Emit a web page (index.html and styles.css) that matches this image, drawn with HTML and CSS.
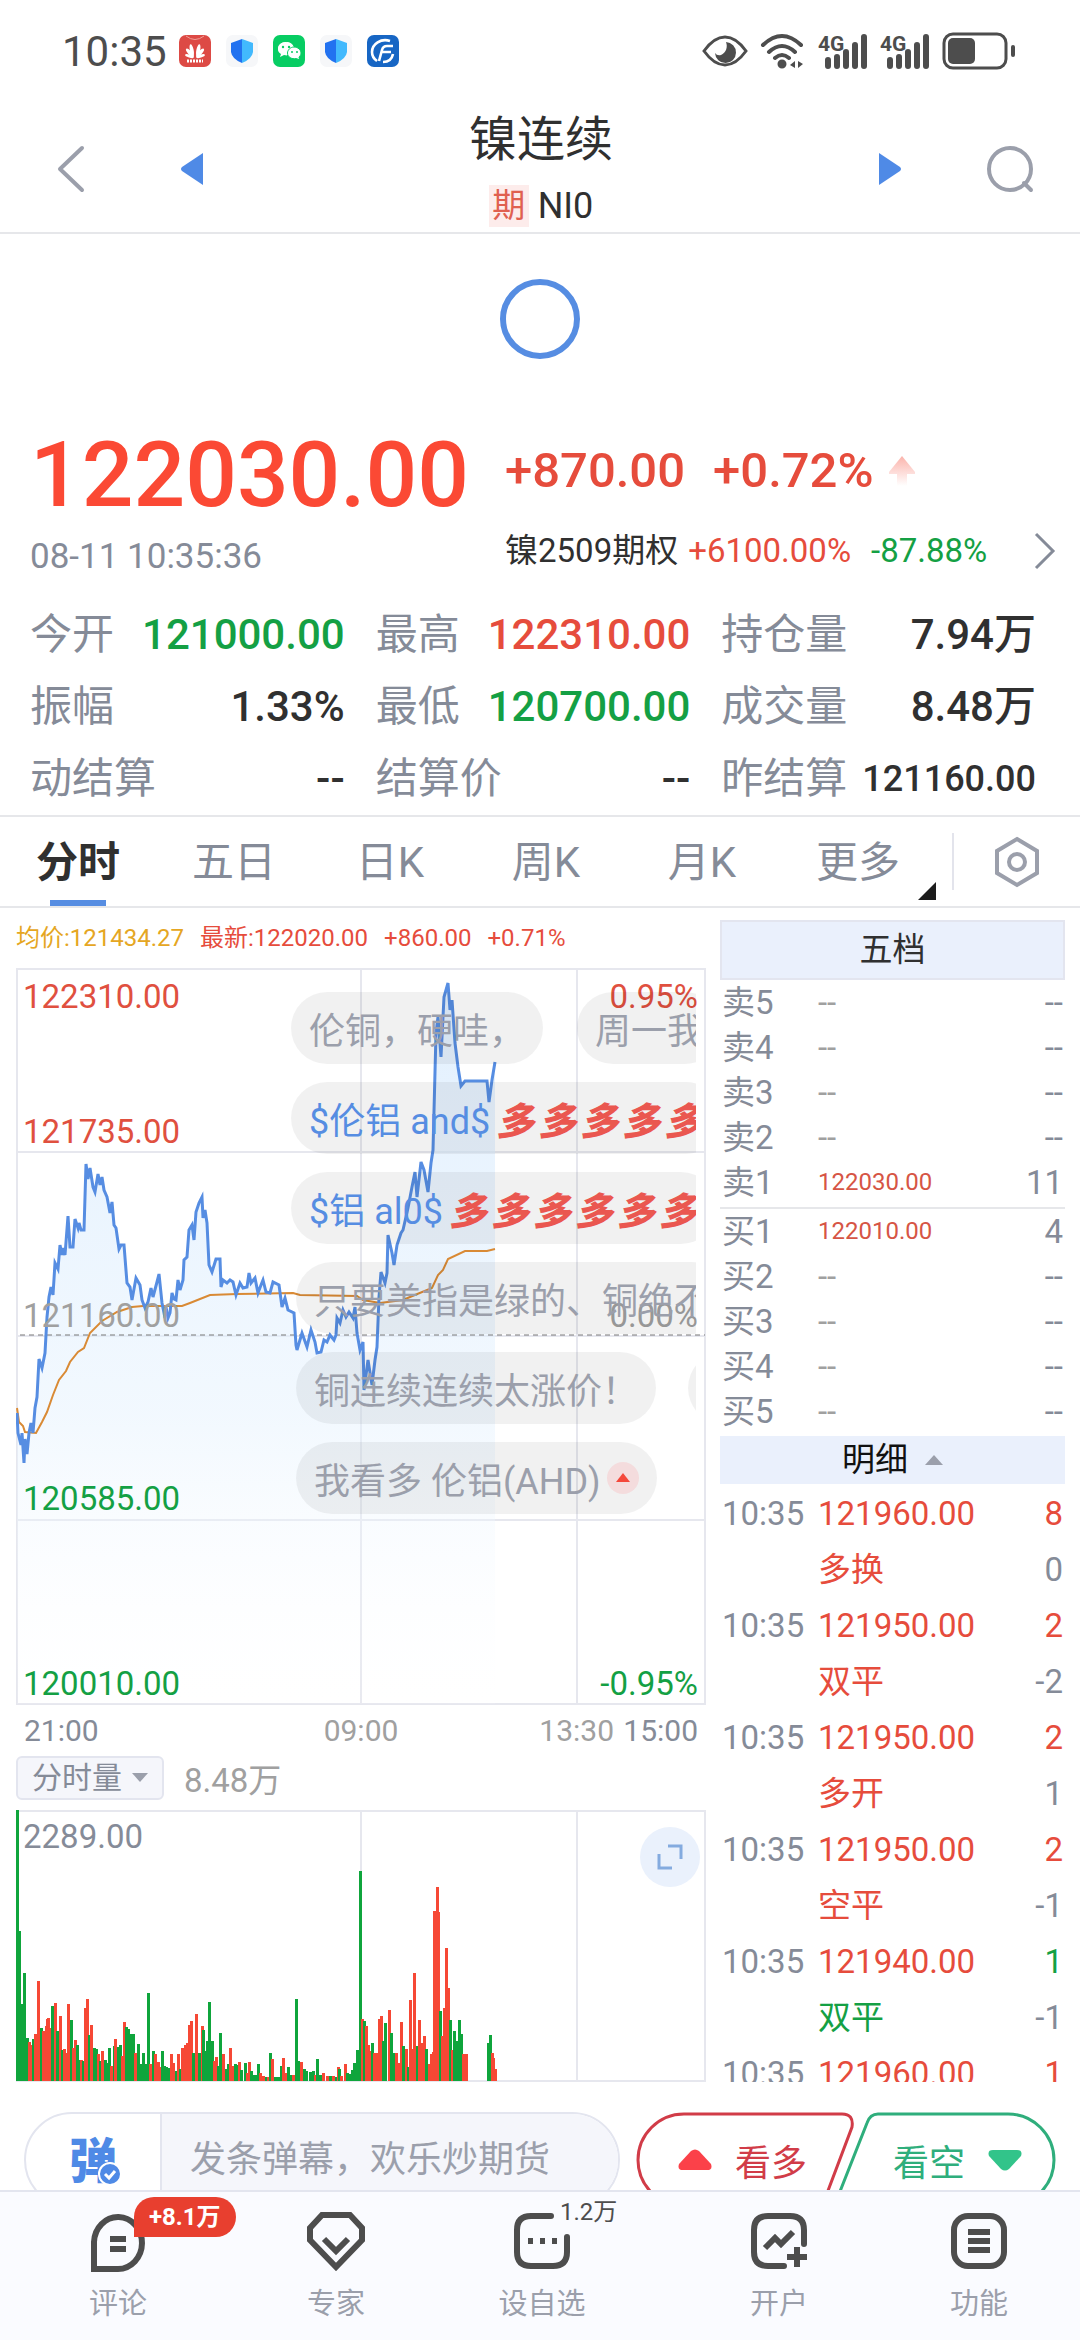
FILE: index.html
```html
<!DOCTYPE html>
<html lang="zh-CN">
<head>
    <meta charset="UTF-8">
    <meta name="viewport" content="width=device-width, initial-scale=1.0">
    <title>镍连续 NI0</title>
    <link rel="stylesheet" href="styles.css">
</head>
<body>
    <div class="status-bar">
        <span class="clock">10:35</span>
        <div class="app-icons">
            <svg width="32" height="32" viewBox="0 0 32 32">
                <rect width="32" height="32" rx="7" fill="#dd4a45"/>
                <path d="M7 1q9 7 18 0" fill="none" stroke="#f0a098"/>
                <g fill="#fff">
                    <ellipse cx="14" cy="15" rx="1.9" ry="6" transform="rotate(-12 14 21)"/>
                    <ellipse cx="18" cy="15" rx="1.9" ry="6" transform="rotate(12 18 21)"/>
                    <ellipse cx="14" cy="16" rx="1.8" ry="5.5" transform="rotate(-42 15 21)"/>
                    <ellipse cx="18" cy="16" rx="1.8" ry="5.5" transform="rotate(42 17 21)"/>
                    <ellipse cx="14" cy="17" rx="1.5" ry="4.5" transform="rotate(-72 15 21.500)"/>
                    <ellipse cx="18" cy="17" rx="1.5" ry="4.5" transform="rotate(72 17 21.500)"/>
                </g>
                <path d="M8 26h16" stroke="#fff" stroke-width="3" stroke-dasharray="2 1"/>
            </svg>
            <svg width="32" height="32" viewBox="0 0 32 32">
                <rect width="32" height="32" rx="7" fill="#f6f7f9"/>
                <path d="M16 4L5 8v9q1 7 11 11z" fill="#2272f0"/>
                <path d="M16 4l11 4v9q-1 7-11 11z" fill="#42b9fd"/>
            </svg>
            <svg width="32" height="32" viewBox="0 0 32 32">
                <rect width="32" height="32" rx="7" fill="#07cd63"/>
                <path d="M13 7c-5 0-8 3-8 7 0 2 1 4 3 5l-1 3 4-2 3 .4M13 7c4 0 7 2 8 6" fill="#fff"/>
                <ellipse cx="13" cy="13.500" rx="8" ry="6.500" fill="#fff"/>
                <path d="M21 12c4 0 7 3 7 6 0 2-1 3-2 4l.5 3-3-1.500c-5 1-9-1.500-9-5.500 0-3 3-6 6.500-6z" fill="#fff" stroke="#07cd63"/>
                <g fill="#07cd63"><circle cx="10" cy="12" r="1.200"/><circle cx="16" cy="12" r="1.200"/><circle cx="19" cy="17" r="1"/><circle cx="24" cy="17" r="1"/></g>
            </svg>
            <svg width="32" height="32" viewBox="0 0 32 32">
                <rect width="32" height="32" rx="7" fill="#f6f7f9"/>
                <path d="M16 4L5 8v9q1 7 11 11z" fill="#2272f0"/>
                <path d="M16 4l11 4v9q-1 7-11 11z" fill="#42b9fd"/>
            </svg>
            <svg width="32" height="32" viewBox="0 0 32 32">
                <rect width="32" height="32" rx="7" fill="#1766c4"/>
                <path d="M23 6C14 3 5 9 5 17c0 4 2 7 5 9M12 26l3-11q1-4 5-4h6M15 17h9M16 27c6 0 9-3 10-8" fill="none" stroke="#fff" stroke-width="2.600"/>
            </svg>
        </div>
        <div class="system-icons">
            <svg width="46" height="36" viewBox="0 0 46 36">
                <path d="M2 18Q12 4 23 4t21 14Q34 32 23 32T2 18z" fill="none" stroke="#4d4d4d" stroke-width="3"/>
                <path d="M24 9a10.500 10.500 0 1 1-11 11q2 3 6 2c5-2 7-8 5-13z" fill="#4d4d4d"/>
            </svg>
            <svg width="46" height="36" viewBox="0 0 46 36" fill="none" stroke="#4d4d4d" stroke-width="4" stroke-linecap="round">
                <path d="M3 12q19-18 38 0M9 19q13-12 26 0M15 25q7-6 14 0"/>
                <circle cx="22" cy="31" r="2.500" fill="#4d4d4d"/>
                <path d="M35 28v7l-5-3zM38 28v7l5-4z" fill="#4d4d4d" stroke="none"/>
            </svg>
            <svg class="signal" width="50" height="36" viewBox="0 0 50 36">
                <text x="0" y="18">4G</text>
                <path d="M10 27v6M19 24v9M28 19v14M37 12v21M46 4v29"/>
            </svg>
            <svg class="signal" width="50" height="36" viewBox="0 0 50 36">
                <text x="0" y="18">4G</text>
                <path d="M10 27v6M19 24v9M28 19v14M37 12v21M46 4v29"/>
            </svg>
            <svg width="74" height="38" viewBox="0 0 74 38">
                <rect x="2" y="2" width="62" height="34" rx="9" fill="none" stroke="#4d4d4d" stroke-width="3"/>
                <rect x="6" y="6" width="27" height="26" rx="5" fill="#4d4d4d"/>
                <path d="M71 15v8" stroke="#4d4d4d" stroke-width="4" stroke-linecap="round"/>
            </svg>
        </div>
    </div>

    <header class="header">
        <button class="icon-button" aria-label="返回">
            <svg width="30" height="48" viewBox="0 0 30 48"><path d="M26 3L4 24l22 21" fill="none" stroke="#9b9fab" stroke-width="4" stroke-linecap="round" stroke-linejoin="round"/></svg>
        </button>
        <button class="icon-button" aria-label="上一个">
            <svg width="24" height="34" viewBox="0 0 24 34"><path d="M23 1v32L2 19q-2-2 0-4z" fill="#4f8ae6"/></svg>
        </button>
        <div class="title">
            <h1>镍连续</h1>
            <p><span class="tag">期</span>NI0</p>
        </div>
        <button class="icon-button" aria-label="下一个">
            <svg width="24" height="34" viewBox="0 0 24 34"><path d="M1 1v32l21-14q2-2 0-4z" fill="#4f8ae6"/></svg>
        </button>
        <button class="icon-button" aria-label="搜索">
            <svg width="48" height="48" viewBox="0 0 48 48" fill="none" stroke="#9b9fab" stroke-width="4"><circle cx="24" cy="24" r="21"/><path d="M38 38l7 7" stroke-linecap="round"/></svg>
        </button>
    </header>

    <div class="loading"><span class="ring"></span></div>

    <section class="quote">
        <div>
            <div class="price">122030.00</div>
            <div class="quote-time">08-11 10:35:36</div>
        </div>
        <div>
            <div class="change">
                <span>+870.00</span><span>+0.72%</span>
                <svg width="28" height="32" viewBox="0 0 28 32">
                    <defs><linearGradient id="fade" x1="0" y1="0" x2="0" y2="1"><stop offset="0" stop-color="#fbb3ab"/><stop offset="1" stop-color="#fff"/></linearGradient></defs>
                    <path d="M14 1l13 16v2h-8v12H9V19H1v-2z" fill="url(#fade)"/>
                </svg>
            </div>
            <a class="option" href="#option">
                <span>镍2509期权</span><span class="up">+6100.00%</span><span class="down">-87.88%</span>
                <svg width="22" height="38" viewBox="0 0 22 38"><path d="M2 2l17 17L2 36" fill="none" stroke="#858b98" stroke-width="3"/></svg>
            </a>
        </div>
    </section>

    <dl class="stats">
        <div><dt>今开</dt><dd class="down">121000.00</dd></div>
        <div><dt>最高</dt><dd class="up">122310.00</dd></div>
        <div><dt>持仓量</dt><dd>7.94万</dd></div>
        <div><dt>振幅</dt><dd>1.33%</dd></div>
        <div><dt>最低</dt><dd class="down">120700.00</dd></div>
        <div><dt>成交量</dt><dd>8.48万</dd></div>
        <div><dt>动结算</dt><dd>--</dd></div>
        <div><dt>结算价</dt><dd>--</dd></div>
        <div><dt>昨结算</dt><dd class="small">121160.00</dd></div>
    </dl>

    <nav class="tabs">
        <button class="tab active">分时</button>
        <button class="tab">五日</button>
        <button class="tab">日K</button>
        <button class="tab">周K</button>
        <button class="tab">月K</button>
        <button class="tab more">更多</button>
        <button class="settings" aria-label="设置">
            <svg width="50" height="52" viewBox="0 0 50 52" fill="none" stroke="#9b9fab" stroke-width="4"><path d="M25 3l20 12v22L25 49 5 37V15z"/><circle cx="25" cy="26" r="8"/></svg>
        </button>
    </nav>

    <main class="board">
        <section class="charts">
            <div class="legend">
                <span class="avg">均价:121434.27</span><span class="up">最新:122020.00</span><span class="up">+860.00</span><span class="up">+0.71%</span>
            </div>
            <div class="chart">
                <svg class="plot" viewBox="0 0 690 737">
                    <defs>
                        <linearGradient id="areaFill" x1="0" y1="0" x2="0" y2="1">
                            <stop offset="0" stop-color="#d5e9fd" stop-opacity="0.7"/>
                            <stop offset="0.6" stop-color="#e5f2fe" stop-opacity="0.5"/>
                            <stop offset="1" stop-color="#ffffff" stop-opacity="0.1"/>
                        </linearGradient>
                    </defs>
                    <path class="grid" d="M1 1H689V736H1zM1 184H689M1 368H689M1 552H689M345 1V736M561 1V736"/>
                    <path id="priceArea" fill="url(#areaFill)"/>
                    <path class="base-line" d="M4 367H689"/>
                    <path id="avgLine" class="avg-line"/>
                    <path id="priceLine" class="price-line"/>
                    <text class="red" x="7" y="40">122310.00</text>
                    <text class="red" x="7" y="175">121735.00</text>
                    <text class="gray" x="7" y="359">121160.00</text>
                    <text class="green" x="7" y="542">120585.00</text>
                    <text class="green" x="7" y="727">120010.00</text>
                    <text class="red end" x="682" y="40">0.95%</text>
                    <text class="gray end" x="682" y="359">0.00%</text>
                    <text class="green end" x="682" y="727">-0.95%</text>
                </svg>
                <div class="comments">
                    <div class="lane"><span class="pill">伦铜，硬哇，</span><span class="pill">周一我</span></div>
                    <div class="lane"><span class="pill"><a href="#and">$伦铝 and$</a><b>多</b><b>多</b><b>多</b><b>多</b><b>多</b></span></div>
                    <div class="lane"><span class="pill"><a href="#al0">$铝 al0$</a><b>多</b><b>多</b><b>多</b><b>多</b><b>多</b><b>多</b></span></div>
                    <div class="lane shifted"><span class="pill">只要美指是绿的、铜绝不</span></div>
                    <div class="lane shifted"><span class="pill">铜连续连续太涨价！</span><span class="pill"></span></div>
                    <div class="lane shifted"><span class="pill">我看多 伦铝(AHD)
                        <svg width="32" height="32" viewBox="0 0 32 32"><circle cx="16" cy="16" r="16" fill="#f4dcdd"/><path d="M16 11l7 9H9z" fill="#f4483b"/></svg></span></div>
                </div>
            </div>
            <div class="axis">
                <span>21:00</span><span class="mid center">09:00</span><span class="mid">13:30</span><span>15:00</span>
            </div>
            <div class="toolbar">
                <button class="indicator">分时量 <svg width="16" height="10" viewBox="0 0 16 10"><path d="M0 0h16L8 9z" fill="#9b9fab"/></svg></button>
                <span>8.48万</span>
            </div>
            <div class="chart">
                <svg class="plot" viewBox="0 0 690 272">
                    <path class="grid" d="M1 1H689V271H1zM345 1V271M561 1V271"/>
                    <g id="volumeBars"></g>
                    <text class="slate" x="7" y="38">2289.00</text>
                </svg>
                <button class="expand" aria-label="全屏">
                    <svg width="26" height="26" viewBox="0 0 26 26" fill="none" stroke="#84abdf" stroke-width="3"><path d="M11 2h13v13M2 10v14h13"/></svg>
                </button>
            </div>
        </section>

        <aside class="depth">
            <h2 class="depth-title">五档</h2>
            <table class="book">
                <tbody>
                    <tr><th>卖5</th><td>--</td><td>--</td></tr>
                    <tr><th>卖4</th><td>--</td><td>--</td></tr>
                    <tr><th>卖3</th><td>--</td><td>--</td></tr>
                    <tr><th>卖2</th><td>--</td><td>--</td></tr>
                    <tr><th>卖1</th><td class="quote-price">122030.00</td><td>11</td></tr>
                </tbody>
            </table>
            <table class="book buy">
                <tbody>
                    <tr><th>买1</th><td class="quote-price">122010.00</td><td>4</td></tr>
                    <tr><th>买2</th><td>--</td><td>--</td></tr>
                    <tr><th>买3</th><td>--</td><td>--</td></tr>
                    <tr><th>买4</th><td>--</td><td>--</td></tr>
                    <tr><th>买5</th><td>--</td><td>--</td></tr>
                </tbody>
            </table>
            <button class="detail-title">明细 <svg width="18" height="10" viewBox="0 0 18 10"><path d="M0 10h18L9 0z" fill="#9b9fab"/></svg></button>
            <table class="trades">
                <tbody>
                    <tr><td>10:35</td><td class="up">121960.00</td><td class="up">8</td></tr>
                    <tr><td></td><td class="up">多换</td><td>0</td></tr>
                    <tr><td>10:35</td><td class="up">121950.00</td><td class="up">2</td></tr>
                    <tr><td></td><td class="up">双平</td><td>-2</td></tr>
                    <tr><td>10:35</td><td class="up">121950.00</td><td class="up">2</td></tr>
                    <tr><td></td><td class="up">多开</td><td>1</td></tr>
                    <tr><td>10:35</td><td class="up">121950.00</td><td class="up">2</td></tr>
                    <tr><td></td><td class="up">空平</td><td>-1</td></tr>
                    <tr><td>10:35</td><td class="up">121940.00</td><td class="down">1</td></tr>
                    <tr><td></td><td class="down">双平</td><td>-1</td></tr>
                    <tr><td>10:35</td><td class="up">121960.00</td><td class="up">1</td></tr>
                </tbody>
            </table>
        </aside>
    </main>

    <section class="dock">
        <div class="composer">
            <button class="bullet" aria-label="弹幕开关">
                <span>弹</span>
                <svg width="24" height="24" viewBox="0 0 24 24"><circle cx="12" cy="12" r="11" fill="#4f8ae6" stroke="#fff" stroke-width="2"/><path d="M7 12l4 4 6-7" fill="none" stroke="#fff" stroke-width="3"/></svg>
            </button>
            <input type="text" aria-label="弹幕" placeholder="发条弹幕，欢乐炒期货">
        </div>
        <div class="vote">
            <svg class="vote-frame" viewBox="0 0 420 96" fill="none" stroke-width="3">
                <path d="M48 2H206Q218 2 216 15L190 84Q187 94 177 94H48A46 46 0 0 1 48 2z" stroke="#d13c48"/>
                <path d="M242 2H372A46 46 0 0 1 372 94H212Q199 94 203 82L231 11Q234 2 242 2z" stroke="#2fae7c"/>
            </svg>
            <button class="bull"><svg width="36" height="22" viewBox="0 0 36 22"><path d="M14 2q4-3 8 0l12 13q2 6-4 6H6q-6 0-4-6z" fill="#fb4149"/></svg>看多</button>
            <button class="bear">看空<svg width="36" height="22" viewBox="0 0 36 22"><path d="M14 20q4 3 8 0L34 7q2-6-4-6H6Q0 1 2 7z" fill="#32c48a"/></svg></button>
        </div>
    </section>

    <nav class="bottom-nav">
        <a href="#comment">
            <svg width="62" height="62" viewBox="0 0 62 62"><path d="M7 59V32A24 26 0 1 1 31 59z"/><path d="M23 29h16M23 39h16"/></svg>
            <span class="badge">+8.1万</span>
            评论
        </a>
        <a href="#expert">
            <svg width="62" height="62" viewBox="0 0 62 62"><path d="M17 5h28l12 13v12L31 57 5 30V18z"/><path d="M19 29l12 12 12-12"/></svg>
            专家
        </a>
        <a href="#watch">
            <svg width="62" height="62" viewBox="0 0 62 62"><path d="M40 6H20Q6 6 6 20v22q0 14 14 14h22q14 0 14-14V27" stroke-linecap="round"/><path d="M17 31h5M29 31h5M41 31h5"/></svg>
            <span class="count">1.2万</span>
            设自选
        </a>
        <a href="#open">
            <svg width="62" height="62" viewBox="0 0 62 62"><path d="M36 56H20Q6 56 6 42V20Q6 6 20 6h22q14 0 14 14v14" stroke-linecap="round"/><path d="M17 38l10-10 6 6 12-12M49 37v20M39 47h20"/></svg>
            开户
        </a>
        <a href="#function">
            <svg width="62" height="62" viewBox="0 0 62 62"><rect x="6" y="6" width="50" height="50" rx="14"/><path d="M20 22h22M20 31h22M20 40h22"/></svg>
            功能
        </a>
    </nav>

    <script src="app.js"></script>
</body>
</html>
```
FILE: styles.css
```css
* {
    box-sizing: border-box;
}
body {
    margin: 0;
    min-height: 100vh;
    display: flex;
    flex-direction: column;
    background-color: #fff;
    color: #303030;
    font-family: Roboto, "Noto Sans CJK SC", sans-serif;
    font-size: 33px;
    overflow-x: hidden;
}
h1, h2, p, dl, dd {
    margin: 0;
    font-weight: normal;
}
button {
    padding: 0;
    border: none;
    background: none;
    font: inherit;
    color: inherit;
    cursor: pointer;
}
a {
    color: inherit;
    text-decoration: none;
}
svg {
    flex: none;
}
.up {
    color: #e64c3c;
}
.down {
    color: #14a044;
}

/* status bar */
.status-bar {
    height: 102px;
    padding: 0 64px 0 62px;
    display: flex;
    align-items: center;
}
.clock {
    font-size: 42px;
    color: #4d4d4d;
}
.app-icons {
    display: flex;
    gap: 15px;
    margin-left: 12px;
}
.system-icons {
    display: flex;
    align-items: center;
    gap: 12px;
    margin-left: auto;
}
.signal path {
    stroke: #4d4d4d;
    stroke-width: 6;
    stroke-linecap: round;
}
.signal text {
    font-size: 21px;
    font-weight: bold;
    fill: #4d4d4d;
}

/* header */
.header {
    height: 132px;
    padding: 3px 46px 0 56px;
    display: flex;
    align-items: center;
    border-bottom: 2px solid #e6e7ea;
}
.icon-button {
    display: flex;
}
.icon-button:first-child {
    margin-right: 94px;
}
.icon-button:last-child {
    margin-left: 84px;
}
.title {
    flex: 1;
    text-align: center;
}
.title h1 {
    font-size: 48px;
    line-height: 60px;
}
.title p {
    display: flex;
    justify-content: center;
    gap: 9px;
    margin-top: 15px;
    font-size: 36px;
    line-height: 42px;
}
.tag {
    width: 40px;
    background-color: #fdeceb;
    color: #e0604f;
    font-size: 33px;
    text-align: center;
}

.loading {
    display: flex;
    justify-content: center;
    padding: 45px 0 67px;
}
.ring {
    width: 80px;
    height: 80px;
    border: 6px solid #568de2;
    border-radius: 50%;
}

/* quote */
.quote {
    display: grid;
    grid-template-columns: 475px 1fr;
    padding: 0 24px 0 30px;
}
.price {
    color: #fb4934;
    font-size: 91px;
    font-weight: 500;
    line-height: 98px;
}
.quote-time {
    margin-top: 9px;
    color: #858b98;
    font-size: 35px;
    line-height: 48px;
}
.change {
    display: flex;
    align-items: center;
    gap: 28px;
    color: #e64c3c;
    font-size: 49px;
    font-weight: 500;
    line-height: 90px;
}
.change svg {
    margin-left: -14px;
}
.option {
    display: flex;
    align-items: center;
    margin-top: 11px;
    line-height: 48px;
}
.option .up {
    margin: 0 20px 0 10px;
}
.option svg {
    margin-left: auto;
}

.stats {
    display: grid;
    grid-template-columns: repeat(3, 1fr);
    column-gap: 31px;
    padding: 18px 44px 0 30px;
    border-bottom: 2px solid #e6e7ea;
    font-size: 42px;
    line-height: 72px;
}
.stats div {
    display: flex;
    justify-content: space-between;
    height: 72px;
    white-space: nowrap;
}
.stats dt {
    color: #858b98;
}
.stats dd {
    font-weight: 500;
}
.stats .small {
    font-size: 36px;
}

/* period tabs */
.tabs {
    height: 91px;
    display: grid;
    grid-template-columns: repeat(6, 156fr) 144fr;
    border-bottom: 2px solid #e6e7ea;
    color: #858b98;
    font-size: 42px;
}
.tab {
    position: relative;
    padding-bottom: 6px;
}
.active {
    color: #303030;
    font-weight: bold;
}
.active::after {
    content: "";
    position: absolute;
    left: 50%;
    bottom: 0;
    width: 56px;
    height: 6px;
    margin-left: -28px;
    background-color: #568de2;
}
.more::after {
    content: "";
    position: absolute;
    right: 0;
    bottom: 6px;
    border-left: 18px solid transparent;
    border-bottom: 18px solid #1c1c1c;
}
.settings {
    display: flex;
    justify-content: center;
    align-items: center;
    margin: 16px 0 16px 16px;
    border-left: 2px solid #e3e4ec;
}

/* board */
.board {
    display: grid;
    grid-template-columns: 690fr 345fr;
    gap: 14px;
    padding: 0 15px 0 16px;
}
.legend {
    display: flex;
    gap: 16px;
    font-size: 24px;
    line-height: 60px;
}
.avg {
    color: #e5a623;
}
.chart {
    position: relative;
}
.plot {
    display: block;
    width: 100%;
}
.plot text {
    font-size: 33px;
}
.grid {
    fill: none;
    stroke: #e6e7ee;
    stroke-width: 2;
}
.base-line {
    stroke: #777;
    stroke-width: 1;
    stroke-dasharray: 5 4;
}
.price-line {
    fill: none;
    stroke: #568de2;
    stroke-width: 3;
}
.avg-line {
    fill: none;
    stroke: #d98a35;
    stroke-width: 2;
}
.plot .red {
    fill: #e0503f;
}
.plot .green {
    fill: #14a044;
}
.plot .gray {
    fill: #a0a0a0;
}
.plot .slate {
    fill: #858b98;
}
.plot .end {
    text-anchor: end;
}

/* bullet comments over the chart */
.comments {
    position: absolute;
    top: 24px;
    left: 275px;
    right: 10px;
    display: flex;
    flex-direction: column;
    gap: 18px;
    overflow: hidden;
}
.lane {
    display: flex;
    gap: 34px;
    height: 72px;
}
.shifted {
    gap: 32px;
    padding-left: 5px;
}
.pill {
    display: flex;
    flex: none;
    align-items: center;
    min-width: 90px;
    padding: 0 18px;
    border-radius: 36px;
    background-color: rgba(0, 0, 0, 0.055);
    color: #9b9fab;
    font-size: 36px;
    white-space: nowrap;
}
.pill a {
    margin-right: 4px;
    color: #568de2;
}
.pill b {
    width: 42px;
    color: #ea5750;
    font-size: 38px;
    font-weight: 900;
    font-style: italic;
    text-align: center;
}
.pill svg {
    margin-left: 6px;
}

.axis {
    display: grid;
    grid-template-columns: 260fr 154fr 176fr 84fr;
    padding: 0 8px;
    color: #858b98;
    font-size: 30px;
    line-height: 51px;
    text-align: right;
}
.axis span:first-child {
    text-align: left;
}
.axis .mid {
    color: #a0a0a0;
}
.axis .center {
    text-align: center;
}
.toolbar {
    display: flex;
    align-items: center;
    gap: 20px;
    height: 44px;
    margin-bottom: 10px;
    color: #a0a0a0;
}
.indicator {
    display: flex;
    justify-content: center;
    align-items: center;
    gap: 10px;
    width: 148px;
    height: 44px;
    border: 2px solid #e3e5ef;
    border-radius: 6px;
    background-color: #f5f6fb;
    color: #858b98;
    font-size: 30px;
    line-height: 40px;
}
.expand {
    position: absolute;
    top: 17px;
    right: 6px;
    display: flex;
    justify-content: center;
    align-items: center;
    width: 60px;
    height: 60px;
    border-radius: 50%;
    background-color: #eaf1fc;
}

/* order book and trades, cut off at the foot of the charts */
.depth {
    height: 0;
    min-height: 100%;
    padding-top: 12px;
    overflow: hidden;
    color: #858b98;
}
.depth-title {
    height: 60px;
    border: 2px solid #e3e5ef;
    background-color: #eaf0fc;
    color: #303030;
    font-size: 33px;
    line-height: 56px;
    text-align: center;
}
.book, .trades {
    width: 100%;
    border-collapse: collapse;
    table-layout: fixed;
}
.book th, .book td, .trades td {
    padding: 0 2px;
    font-weight: normal;
    text-align: left;
    white-space: nowrap;
}
.book th, .trades td:first-child {
    width: 96px;
}
.book td:last-child, .trades td:last-child {
    width: 70px;
    text-align: right;
}
.book td:nth-child(2) {
    color: #a0a0a0;
}
.book tr {
    height: 45px;
    line-height: 45px;
}
.buy {
    margin-top: 2px;
    border-top: 2px solid #e6e7ea;
}
.book td.quote-price {
    color: #d65545;
    font-size: 24px;
}
.detail-title {
    display: flex;
    justify-content: center;
    align-items: center;
    gap: 17px;
    width: 100%;
    height: 48px;
    margin: 2px 0;
    background-color: #eaf0fc;
    color: #111;
    line-height: 48px;
}
.trades tr {
    height: 56px;
    line-height: 56px;
}

/* comment box and vote buttons */
.dock {
    display: flex;
    justify-content: space-between;
    height: 108px;
    padding: 30px 24px 0;
    overflow: hidden;
}
.composer {
    display: flex;
    width: 596px;
    height: 96px;
    border: 2px solid #e3e5ef;
    border-radius: 48px;
    overflow: hidden;
}
.bullet {
    position: relative;
    width: 136px;
    padding-bottom: 6px;
    border-right: 2px solid #e3e5ef;
    color: #4f8ae6;
    font-size: 48px;
    font-weight: 900;
}
.bullet svg {
    position: absolute;
    right: 38px;
    bottom: 20px;
}
.composer input {
    flex: 1;
    min-width: 0;
    padding: 0 28px;
    border: none;
    background-color: #f5f6fb;
    font: inherit;
    font-size: 36px;
}
.composer input::placeholder {
    color: #9b9fab;
}
.vote {
    position: relative;
    display: flex;
    width: 420px;
    height: 96px;
    font-size: 36px;
}
.vote-frame {
    position: absolute;
    width: 100%;
}
.vote button {
    flex: 1;
    display: flex;
    justify-content: center;
    align-items: center;
    gap: 22px;
}
.vote .bull {
    padding-left: 8px;
    color: #d13c48;
}
.vote .bear {
    padding-left: 20px;
    color: #2fae7c;
}

/* bottom nav */
.bottom-nav {
    flex: 1;
    display: grid;
    grid-template-columns: 236fr 200fr 212fr 262fr 138fr;
    padding: 18px 32px 0 0;
    border-top: 2px solid #e3e5ef;
    background-color: #fafbff;
    color: #9b9fab;
    font-size: 29px;
    line-height: 44px;
}
.bottom-nav a {
    position: relative;
    display: flex;
    flex-direction: column;
    align-items: center;
    gap: 10px;
}
.bottom-nav svg {
    fill: none;
    stroke: #4d4d4d;
    stroke-width: 6;
}
.badge, .count {
    position: absolute;
    font-size: 24px;
}
.badge {
    top: -13px;
    left: 134px;
    height: 40px;
    padding: 0 15px;
    border-radius: 20px 20px 20px 0;
    background-color: #e83f2f;
    color: #fff;
    font-weight: bold;
    line-height: 40px;
}
.count {
    top: -16px;
    left: 120px;
    padding-left: 4px;
    background-color: #fafbff;
    color: #4d4d4d;
    line-height: 36px;
}
```
FILE: app.js
```javascript
// 分时价格线 [x, y]
const price = [
    [1,445],[2,465],[5,477],[6,465],[8,495],[9,471],[11,486],[13,465],[15,455],[17,465],[19,440],[21,429],
    [23,391],[26,400],[29,385],[31,349],[33,329],[35,319],[37,327],[39,295],[42,301],[44,277],[46,287],[47,280],
    [49,287],[52,248],[54,279],[57,279],[59,251],[62,260],[63,255],[65,262],[68,262],[70,196],[72,211],[74,200],
    [77,219],[79,224],[82,206],[84,217],[86,209],[88,222],[91,229],[94,245],[96,234],[98,257],[100,260],[103,281],
    [105,277],[108,277],[111,315],[114,319],[116,332],[120,310],[124,317],[126,332],[129,340],[132,334],[135,320],
    [137,329],[141,314],[143,306],[146,335],[148,345],[150,339],[152,350],[154,345],[156,325],[158,331],[160,332],
    [162,312],[164,322],[167,312],[168,292],[171,289],[173,262],[176,257],[178,272],[180,244],[183,235],[186,229],
    [187,250],[189,242],[191,255],[193,297],[196,304],[200,291],[204,291],[205,319],[207,312],[211,315],[214,312],
    [217,314],[220,327],[224,315],[227,320],[231,319],[233,305],[235,315],[239,310],[242,325],[245,317],[247,312],
    [250,324],[254,325],[257,314],[263,317],[266,339],[269,330],[272,342],[278,345],[280,377],[281,382],[286,365],
    [291,379],[295,362],[299,374],[301,385],[305,384],[308,372],[311,374],[314,367],[318,372],[320,367],[321,350],
    [324,355],[327,342],[330,349],[333,344],[337,350],[339,339],[341,365],[344,382],[347,374],[348,422],[352,392],
    [356,417],[359,392],[361,379],[363,329],[365,304],[369,315],[371,305],[372,267],[376,285],[378,297],[381,277],
    [385,265],[387,262],[392,240],[396,219],[399,204],[401,229],[405,194],[408,202],[412,224],[415,195],[417,182],
    [420,65],[422,49],[425,89],[428,29],[432,15],[434,42],[436,32],[439,75],[442,99],[445,118],[449,113],[471,113],
    [473,134],[476,112],[479,94]
];

// 均价线
const average = [
    [1,440],[3,454],[7,458],[9,464],[20,465],[26,454],[31,444],[37,427],[43,412],[50,403],[54,394],[62,384],[68,380],
    [74,365],[86,353],[101,344],[116,339],[127,338],[166,338],[174,335],[184,331],[194,327],[221,326],[277,325],
    [284,327],[341,328],[347,332],[364,335],[387,332],[394,329],[416,320],[422,307],[427,302],[432,291],[449,283],
    [471,283],[479,281]
];

// 成交量 [x, 高度, 颜色]
const g = '#0fa53c';
const r = '#f64835';
const volume = [
    [1,271,g],[3,150,g],[5,77,g],[8,108,g],[11,43,g],[13,39,r],[15,36,r],[17,42,g],[19,47,r],[22,100,r],[25,53,g],
    [27,50,r],[30,55,r],[31,62,r],[32,63,r],[34,53,r],[36,75,g],[39,78,r],[41,50,g],[44,65,r],[46,31,g],[48,32,r],
    [50,28,r],[52,77,r],[55,61,g],[57,33,r],[59,41,r],[61,36,g],[63,21,g],[65,21,r],[67,20,g],[69,73,r],[71,82,r],
    [73,46,g],[75,56,r],[78,33,g],[80,32,g],[82,27,r],[84,20,g],[86,30,r],[89,21,g],[91,18,g],[93,33,g],[95,15,r],
    [98,35,g],[99,42,r],[102,34,g],[104,36,g],[106,25,r],[108,59,r],[110,54,g],[112,52,g],[114,47,g],[117,47,g],
    [119,28,r],[122,37,g],[124,17,g],[127,28,g],[129,17,g],[132,88,g],[134,17,r],[137,30,g],[139,27,r],[142,19,r],
    [144,14,r],[146,30,g],[148,15,g],[150,14,g],[152,13,g],[155,27,r],[157,18,r],[160,10,g],[162,27,r],[164,12,g],
    [166,33,r],[169,36,r],[171,38,r],[173,56,r],[175,60,r],[177,28,g],[180,67,r],[183,28,g],[186,55,r],[187,51,g],
    [190,30,g],[191,40,g],[193,79,g],[196,40,g],[198,20,r],[200,24,r],[202,15,g],[204,48,g],[207,27,r],[210,12,g],
    [212,17,g],[214,33,r],[217,15,r],[219,17,g],[221,16,g],[223,19,r],[225,11,g],[229,18,g],[231,8,r],[233,19,r],
    [235,10,g],[238,6,g],[240,6,g],[242,17,g],[244,8,r],[247,5,r],[250,4,g],[252,4,r],[254,28,g],[256,22,r],[259,4,g],
    [262,4,g],[265,15,g],[267,23,r],[270,8,r],[272,14,g],[275,6,g],[277,6,r],[280,82,g],[282,20,g],[285,19,r],
    [288,12,g],[290,10,g],[294,9,g],[297,10,g],[299,6,r],[301,22,g],[304,6,g],[307,8,r],[311,5,r],[314,5,g],[317,5,r],
    [320,4,g],[322,14,r],[323,12,g],[325,5,r],[329,17,r],[331,8,g],[333,7,g],[336,11,g],[338,18,g],[341,31,g],
    [344,210,g],[346,62,r],[348,60,g],[350,55,r],[352,36,r],[354,30,r],[356,38,g],[358,28,r],[361,28,r],[363,62,r],
    [365,65,r],[367,40,g],[369,58,g],[373,71,r],[375,48,g],[377,28,g],[380,28,r],[383,18,r],[385,59,r],[387,35,g],
    [390,32,r],[392,14,g],[394,81,r],[396,32,r],[398,108,r],[401,35,g],[403,61,r],[405,38,r],[408,45,r],[410,32,g],
    [413,17,r],[415,27,r],[417,29,r],[418,170,r],[421,194,r],[422,169,r],[424,70,g],[426,45,r],[428,73,r],[430,133,r],
    [432,93,r],[434,61,g],[436,31,r],[438,50,g],[440,40,g],[443,61,g],[445,47,g],[447,27,r],[450,27,r],[472,38,g],
    [474,46,g],[476,28,r],[477,23,r],[479,12,r]
];

function toPath(points) {
    return 'M' + points.map(p => p.join(' ')).join('L');
}

document.getElementById('priceLine').setAttribute('d', toPath(price));
document.getElementById('priceArea').setAttribute('d', toPath(price) + 'V736H1Z');
document.getElementById('avgLine').setAttribute('d', toPath(average));

const bars = document.getElementById('volumeBars');
volume.forEach(([x, height, color]) => {
    const bar = document.createElementNS('http://www.w3.org/2000/svg', 'rect');
    bar.setAttribute('x', x - 1);
    bar.setAttribute('y', 271 - height);
    bar.setAttribute('width', 3);
    bar.setAttribute('height', height);
    bar.setAttribute('fill', color);
    bars.appendChild(bar);
});
```
